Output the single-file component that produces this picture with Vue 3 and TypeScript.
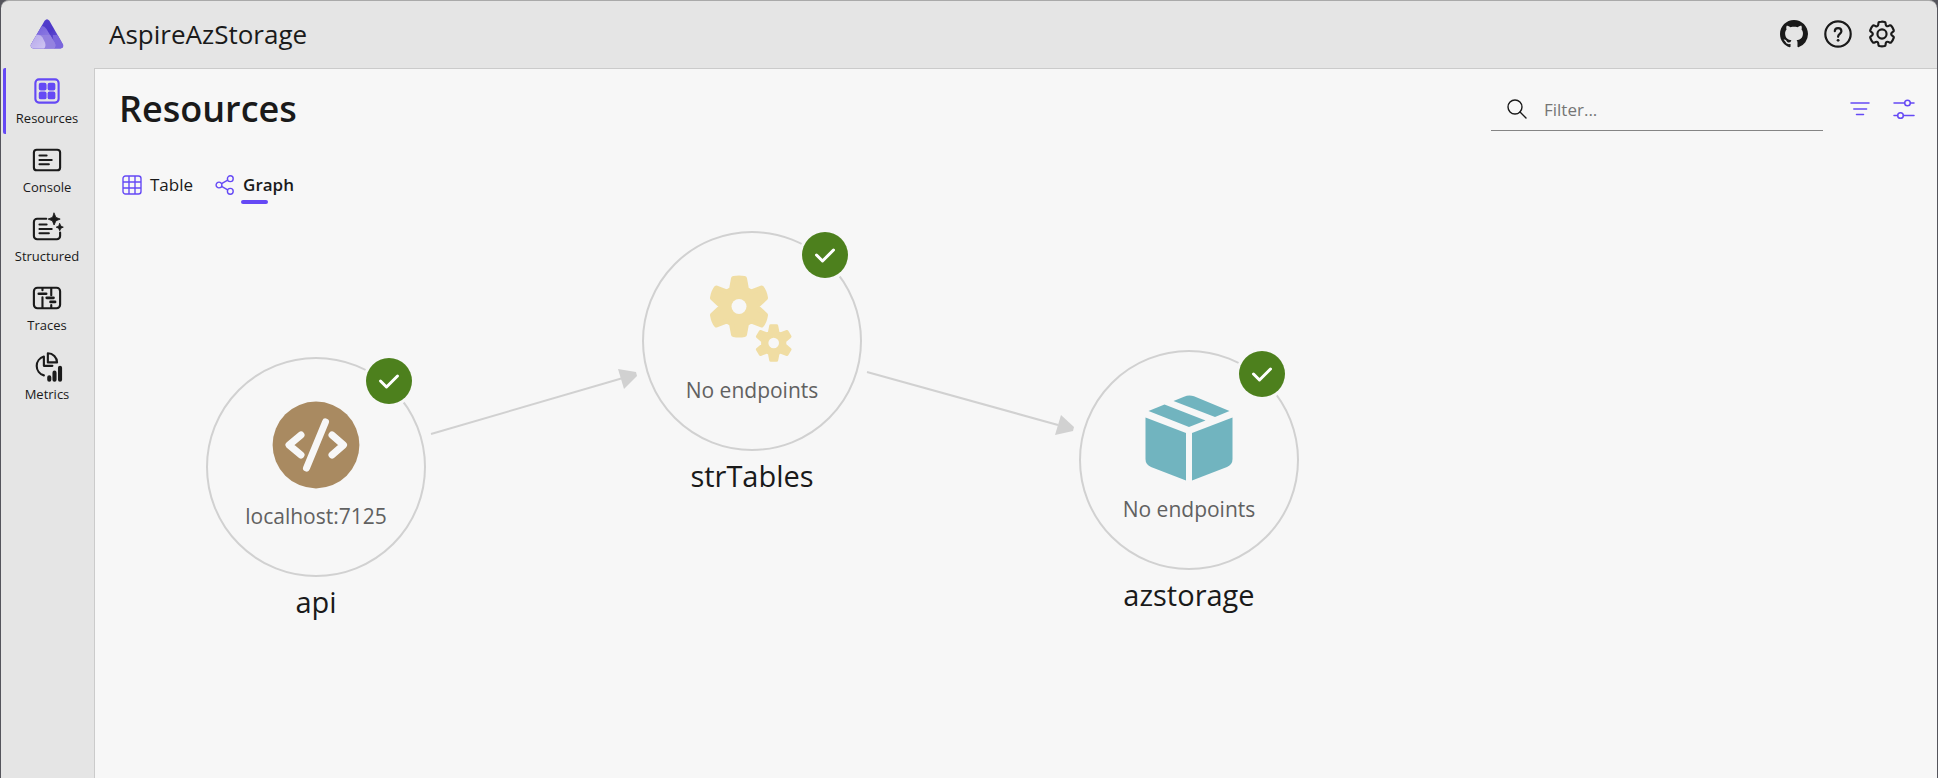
<script setup lang="ts">
import { ref } from 'vue'

interface NavItem { id: string; label: string }
interface GraphNode { id: string; name: string; endpoint: string; icon: 'code' | 'gears' | 'box'; x: number; y: number }
interface Edge { id: string; x1: number; y1: number; x2: number; y2: number; head: string }

const navItems: NavItem[] = [
  { id: 'resources', label: 'Resources' },
  { id: 'console', label: 'Console' },
  { id: 'structured', label: 'Structured' },
  { id: 'traces', label: 'Traces' },
  { id: 'metrics', label: 'Metrics' },
]
const activePage = ref('resources')
const activeTab = ref<'table' | 'graph'>('graph')
const filter = ref('')

const nodes: GraphNode[] = [
  { id: 'api', name: 'api', endpoint: 'localhost:7125', icon: 'code', x: 221, y: 258 },
  { id: 'tables', name: 'strTables', endpoint: 'No endpoints', icon: 'gears', x: 657, y: 132 },
  { id: 'storage', name: 'azstorage', endpoint: 'No endpoints', icon: 'box', x: 1094, y: 251 },
]
const edges: Edge[] = [
  { id: 'api-tables', x1: 336, y1: 225, x2: 528, y2: 169, head: '523,160 541,163 542,167 529,180' },
  { id: 'tables-storage', x1: 772, y1: 163, x2: 963, y2: 216, head: '966,206 979,218 978,222 960,226' },
]
</script>

<template>
  <div class="window">
    <header class="topbar">
      <a class="logo" href="#" aria-label="Home">
        <svg viewBox="0 0 34 30" width="34" height="30">
          <defs>
            <linearGradient id="peak" x1="0" y1="0" x2="1" y2="1">
              <stop offset="0" stop-color="#5440cf" /><stop offset=".5" stop-color="#4d38c8" /><stop offset="1" stop-color="#7a63dc" />
            </linearGradient>
            <linearGradient id="ridge" x1="0" y1="0" x2="1" y2="1">
              <stop offset="0" stop-color="#6f5bdb" /><stop offset="1" stop-color="#a08fe6" />
            </linearGradient>
            <linearGradient id="hill" x1="0" y1="0" x2="1" y2="1">
              <stop offset="0" stop-color="#b5a8ea" /><stop offset="1" stop-color="#cfc5f2" />
            </linearGradient>
          </defs>
          <path d="M14.600 1.800Q17 -1.200 19.400 1.800L33 25.500Q34 29 30.500 29.500H3.500Q0 29 1 25.500Z" fill="url(#peak)" />
          <path d="M22.800 16H27.600L33 25.500Q34 29 30.500 29.500H24Z" fill="#7a66dc" />
          <path d="M11.500 7.200Q14 6.500 16.500 10L24.500 23.500Q26.500 27 24 29.500H3.500Q0 29 1 25.500Z" fill="url(#ridge)" />
          <path d="M6.400 16H20.100L24.500 23.500Q26.500 27 24 29.500H3.500Q0 29 1 25.500Z" fill="#9482e0" />
          <path d="M6.400 16Q10.500 15 12.500 18.500L15 23.500Q16.300 27.500 14 29.500H3.500Q0 29 1 25.500Z" fill="url(#hill)" />
        </svg>
      </a>
      <span class="app-name">AspireAzStorage</span>
      <div class="top-actions">
        <a href="#" aria-label="GitHub repository">
          <svg viewBox="0 0 16 16" width="28" height="28"><path fill="currentColor" d="M8 0C3.580 0 0 3.580 0 8c0 3.540 2.290 6.530 5.470 7.590.4.070.55-.17.55-.38 0-.19-.01-.82-.01-1.490-2.010.37-2.530-.49-2.690-.94-.09-.23-.48-.94-.82-1.130-.28-.15-.68-.52-.01-.53.63-.01 1.080.58 1.230.82.72 1.210 1.870.87 2.330.66.07-.52.28-.87.51-1.070-1.780-.2-3.640-.89-3.640-3.950 0-.87.31-1.590.82-2.150-.08-.2-.36-1.020.08-2.120 0 0 .67-.21 2.200.82.64-.18 1.320-.27 2-.27s1.360.09 2 .27c1.530-1.040 2.200-.82 2.200-.82.44 1.100.16 1.920.08 2.120.51.56.82 1.270.82 2.150 0 3.070-1.870 3.750-3.650 3.950.29.25.54.73.54 1.480 0 1.070-.01 1.930-.01 2.200 0 .21.15.46.55.38A8.010 8.010 0 0 0 16 8c0-4.420-3.580-8-8-8z" /></svg>
        </a>
        <button type="button" aria-label="Help">
          <svg viewBox="0 0 28 28" width="28" height="28" fill="none" stroke="currentColor" stroke-width="2.200" stroke-linecap="round">
            <circle cx="14" cy="14" r="12.700" />
            <path d="M10.800 11.200c0-4.200 6.600-4.200 6.600 0 0 2.600-3.300 2.800-3.300 5.600" />
            <circle cx="14.100" cy="20.300" r="1.400" fill="currentColor" stroke="none" />
          </svg>
        </button>
        <button type="button" aria-label="Settings">
          <svg viewBox="1.500 1.500 21 21" width="28" height="28" fill="none" stroke="currentColor" stroke-width="1.700">
            <g transform="translate(0.600 0.600) scale(.95)">
              <path d="M12.010 2.250c.74 0 1.470.1 2.180.25.32.07.55.33.59.65l.17 1.530a1.380 1.380 0 0 0 1.920 1.110l1.400-.61c.3-.13.64-.06.85.17a9.790 9.790 0 0 1 2.200 3.800c.1.3-.01.64-.27.83l-1.240.92a1.380 1.380 0 0 0 0 2.220l1.240.92c.26.19.37.52.27.82a9.800 9.800 0 0 1-2.200 3.800.75.75 0 0 1-.85.18l-1.400-.62a1.380 1.380 0 0 0-1.930 1.120l-.17 1.520a.75.75 0 0 1-.58.65 9.520 9.520 0 0 1-4.400 0 .75.75 0 0 1-.57-.65l-.17-1.520a1.380 1.380 0 0 0-1.930-1.110l-1.400.62a.75.75 0 0 1-.85-.18 9.800 9.800 0 0 1-2.200-3.800c-.1-.3.01-.63.27-.82l1.240-.92a1.380 1.380 0 0 0 0-2.220l-1.240-.92a.75.75 0 0 1-.28-.83 9.800 9.800 0 0 1 2.200-3.800c.23-.23.57-.3.86-.17l1.400.61a1.380 1.380 0 0 0 1.930-1.110l.17-1.530a.75.75 0 0 1 .58-.65c.72-.15 1.450-.24 2.200-.25Z" />
              <circle cx="12" cy="12" r="3.600" />
            </g>
          </svg>
        </button>
      </div>
    </header>

    <nav class="sidebar" aria-label="Pages">
      <a
        v-for="item in navItems"
        :key="item.id"
        href="#"
        class="nav-item"
        :class="{ active: activePage === item.id }"
        @click.prevent="activePage = item.id"
      >
        <svg viewBox="0 0 24 24" width="34" height="34" fill="none" stroke="currentColor" stroke-width="1.500" stroke-linecap="round" stroke-linejoin="round">
          <template v-if="item.id === 'resources'">
            <rect x="3.800" y="3.800" width="16.400" height="16.400" rx="2.500" />
            <g fill="currentColor" stroke="none">
              <rect x="6.200" y="6.200" width="5.500" height="5.500" rx="1.400" /><rect x="12.400" y="6.200" width="5.500" height="5.500" rx="1.400" />
              <rect x="6.200" y="12.400" width="5.500" height="5.500" rx="1.400" /><rect x="12.400" y="12.400" width="5.500" height="5.500" rx="1.400" />
            </g>
          </template>
          <template v-else-if="item.id === 'console'">
            <rect x="2.750" y="4.750" width="18.500" height="14.500" rx="2" />
            <path d="M6.700 8.800h5M6.700 12h8.600M6.700 15h6.600" />
          </template>
          <template v-else-if="item.id === 'structured'">
            <path d="M11.500 4.750H5a2.250 2.250 0 0 0-2.250 2.250v10A2.250 2.250 0 0 0 5 19.250h14a2.250 2.250 0 0 0 2.250-2.250v-2.500M6.700 8.800h5M6.700 12h8.600M6.700 15h6.600" />
            <path d="M17 .8l1.300 3 3 1.200-3 1.200-1.300 3-1.200-3-3-1.200 3-1.200zM21 8.200l.8 1.800 1.700.7-1.700.7-.8 1.800-.8-1.800-1.700-.7 1.700-.7z" fill="currentColor" stroke-width=".6" />
          </template>
          <template v-else-if="item.id === 'traces'">
            <rect x="2.750" y="4.750" width="18.500" height="14.500" rx="2.500" />
            <path d="M8.800 5v1.500M8.800 11.500v7.500M15 5v5M15 17v2" />
            <path d="M6.200 9h5.200M11.800 11.900h4.800M14.500 14.800h3.200" stroke-width="1.900" />
          </template>
          <template v-else>
            <path d="M12.600 2.250v6.500h6.500A6.500 6.500 0 0 0 12.600 2.250zM9.800 4.600a6.900 6.900 0 0 0 0 13.300M9.800 4.600V11.200h6" />
            <path d="M13.600 19.300v1.700M17.300 16V21M21.200 12.500V21" stroke-width="2.900" />
          </template>
        </svg>
        <span>{{ item.label }}</span>
      </a>
    </nav>

    <main class="content">
      <div class="page-head">
        <h1>Resources</h1>
        <div class="toolbar">
          <label class="search">
            <svg viewBox="0 0 20 20" width="20" height="20" fill="none" stroke="currentColor" stroke-width="1.400" stroke-linecap="round">
              <circle cx="8" cy="8" r="7" /><path d="M13 13l6 6" />
            </svg>
            <input v-model="filter" type="text" placeholder="Filter..." aria-label="Filter resources" />
          </label>
          <button type="button" aria-label="Filter options">
            <svg viewBox="0 0 22 20" width="22" height="20" fill="none" stroke="currentColor" stroke-width="1.500" stroke-linecap="round"><path d="M2 4h18M4.800 10h12.800M7.500 15.500h7" /></svg>
          </button>
          <button type="button" aria-label="View options">
            <svg viewBox="0 0 22 20" width="22" height="20" fill="none" stroke="currentColor" stroke-width="1.500" stroke-linecap="round"><path d="M1 4h10.500M17.500 4h3.500M1 16.500h3.500M10.500 16.500h10.500" /><circle cx="14.500" cy="4" r="2.800" /><circle cx="7.500" cy="16.500" r="2.800" /></svg>
          </button>
        </div>
      </div>

      <div class="tabs" role="tablist">
        <button type="button" role="tab" class="tab" :class="{ selected: activeTab === 'table' }" :aria-selected="activeTab === 'table'" @click="activeTab = 'table'">
          <svg viewBox="0 0 20 20" width="20" height="20" fill="none" stroke="currentColor" stroke-width="1.400"><rect x="1" y="1" width="18" height="18" rx="2.500" /><path d="M7 1v18M13 1v18M1 7h18M1 13h18" /></svg>
          <span>Table</span>
        </button>
        <button type="button" role="tab" class="tab" :class="{ selected: activeTab === 'graph' }" :aria-selected="activeTab === 'graph'" @click="activeTab = 'graph'">
          <svg viewBox="0 0 20 20" width="20" height="20" fill="none" stroke="currentColor" stroke-width="1.400"><circle cx="4" cy="10" r="2.900" /><circle cx="15.300" cy="3.700" r="2.900" /><circle cx="15.300" cy="16.300" r="2.900" /><path d="M6.600 8.600l6.100-3.500M6.600 11.400l6.100 3.500" /></svg>
          <span>Graph</span>
        </button>
      </div>

      <svg class="graph" role="img" aria-label="Resource graph">
        <g v-for="edge in edges" :key="edge.id">
          <line :x1="edge.x1" :y1="edge.y1" :x2="edge.x2" :y2="edge.y2" class="edge" />
          <polygon :points="edge.head" class="edge-head" />
        </g>
        <g v-for="node in nodes" :key="node.id" :transform="`translate(${node.x} ${node.y})`">
          <circle r="109" class="ring" />
          <g v-if="node.icon === 'code'" transform="translate(0 -22)">
            <circle r="43.400" fill="#a98a61" />
            <path d="M-15 -10L-27 0L-15 10M16 -10L27.500 0L16 10M9.500 -23L-9.500 23" class="code-mark" />
          </g>
          <g v-else-if="node.icon === 'gears'" fill="#f0dda3" stroke="#f0dda3" stroke-linejoin="round">
            <path stroke-width="5" d="M-18.500 -62.500Q-13 -63.500 -7.500 -62.500L-5.500 -51.500L-1 -49L9.500 -53Q12.500 -49.500 13.500 -43L5.500 -35.500V-33.500L13.500 -26Q12.500 -19.500 9.500 -16L-1 -20L-5.500 -17.500L-7.500 -6.500Q-13 -5.500 -18.500 -6.500L-20.500 -17.500L-25 -20L-35.500 -16Q-38.500 -19.500 -39.500 -26L-31.500 -33.500V-35.500L-39.500 -43Q-38.500 -49.500 -35.500 -53L-25 -49L-20.500 -51.500Z" />
            <circle cx="-13" cy="-34.500" r="7.500" class="hole" />
            <path stroke-width="3" d="M18.700 -15.200H24.700L26 -8.500L28.500 -7L35 -9.500L38 -4.500L32.800 0V4L38 8.500L35 13.500L28.500 11L26 12.500L24.700 19.200H18.700L17.400 12.500L14.900 11L8.400 13.500L5.400 8.500L10.600 4V0L5.400 -4.500L8.400 -9.500L14.900 -7L17.400 -8.500Z" />
            <circle cx="21.700" cy="2" r="5.300" class="hole" />
          </g>
          <g v-else fill="#71b4bf">
            <path d="M-43.500 -42.500L-3 -27V20.500L-38 7Q-43.500 4.500 -43.500 -1Z" />
            <path d="M43.500 -42.500L3 -27V20.500L38 7Q43.500 4.500 43.500 -1Z" />
            <path d="M-40.500 -49L-24.500 -55.500L16.500 -39.500L0 -33Z" />
            <path d="M-15.500 -59L-5 -63.300Q0 -65.500 5 -63.700L40.500 -49L26 -43Z" />
          </g>
          <text y="57" class="endpoint">{{ node.endpoint }}</text>
          <text y="146" class="node-name">{{ node.name }}</text>
          <g transform="translate(73 -86)">
            <circle r="26" fill="#f7f7f7" />
            <circle r="23" fill="#4d801d" />
            <path d="M-8.500 0L-2.500 6L8.500 -5" class="tick" />
          </g>
        </g>
      </svg>
    </main>
  </div>
</template>

<style>
body { margin: 0; background: #55555c; }
</style>

<style scoped>
.window {
  box-sizing: border-box;
  min-height: 100vh;
  display: grid;
  grid-template-columns: 93px 1fr;
  grid-template-rows: 67px 1fr;
  margin: 0 1px;
  border-top: 1px solid #a9a9a9;
  border-radius: 8px 8px 0 0;
  overflow: hidden;
  background: #e5e5e5;
  color: #1a1a1a;
  font-family: "Open Sans", "Noto Sans", sans-serif;
}
svg { display: block; }
button { padding: 0; border: 0; background: none; color: inherit; font: inherit; cursor: pointer; }
a { color: inherit; text-decoration: none; }

.topbar { grid-column: 1 / -1; display: flex; align-items: center; padding: 0 41px 2px 0; }
.logo { width: 91px; display: flex; justify-content: center; }
.app-name { margin-left: 17px; font-size: 26px; line-height: 36px; }
.top-actions { margin-left: auto; display: flex; gap: 16px; }

.sidebar { display: flex; flex-direction: column; gap: 3px; }
.nav-item {
  box-sizing: border-box;
  height: 66px;
  display: flex;
  flex-direction: column;
  align-items: center;
  margin-left: 2px;
  padding: 6px 6px 0 0;
  font-size: 13px;
  line-height: 20px;
  border-left: 3px solid transparent;
}
.nav-item.active { border-left-color: #6549f5; border-radius: 2px; }
.nav-item.active svg { color: #6549f5; }

.content {
  min-width: 0;
  display: flex;
  flex-direction: column;
  border: solid #cbcbcb;
  border-width: 1px 0 0 1px;
  background: #f7f7f7;
}
.page-head { display: flex; align-items: center; justify-content: space-between; padding: 14px 22px 0 24px; }
h1 { margin: 0; font-size: 36px; line-height: 52px; font-weight: 600; }
.toolbar { display: flex; align-items: center; color: #6549f5; gap: 22px; }
.search {
  box-sizing: border-box;
  width: 332px;
  height: 44px;
  margin-right: 4px;
  padding-left: 16px;
  display: flex;
  align-items: center;
  gap: 17px;
  border-bottom: 1px solid #858585;
  color: #1a1a1a;
}
input { flex: 1; min-width: 0; padding: 2px 0 0; border: 0; outline: 0; background: none; font: inherit; font-size: 17px; line-height: 24px; }
input::placeholder { color: #757575; opacity: 1; }

.tabs { display: flex; gap: 22px; margin-top: 32px; padding-left: 27px; }
.tab { display: flex; align-items: center; gap: 8px; height: 36px; font-size: 17px; line-height: 24px; }
.tab svg { color: #6549f5; }
.tab span { position: relative; }
.tab.selected { font-weight: 600; }
.tab.selected span::after { content: ""; position: absolute; left: -2px; bottom: -7px; width: 27px; height: 4px; border-radius: 2px; background: #6549f5; }

.graph { flex: 1; width: 100%; min-height: 480px; margin-top: 6px; overflow: visible; }
.edge, .ring { fill: none; stroke: #d1d1d1; stroke-width: 2; }
.edge-head { fill: #d1d1d1; }
.code-mark { fill: none; stroke: #f7f7f7; stroke-width: 7; stroke-linecap: round; stroke-linejoin: round; }
.hole { fill: #f7f7f7; stroke: none; }
.tick { fill: none; stroke: #fff; stroke-width: 3; stroke-linecap: round; stroke-linejoin: round; }
.endpoint { font-size: 21px; fill: #616161; text-anchor: middle; }
.node-name { font-size: 29px; fill: #1a1a1a; text-anchor: middle; }
</style>
